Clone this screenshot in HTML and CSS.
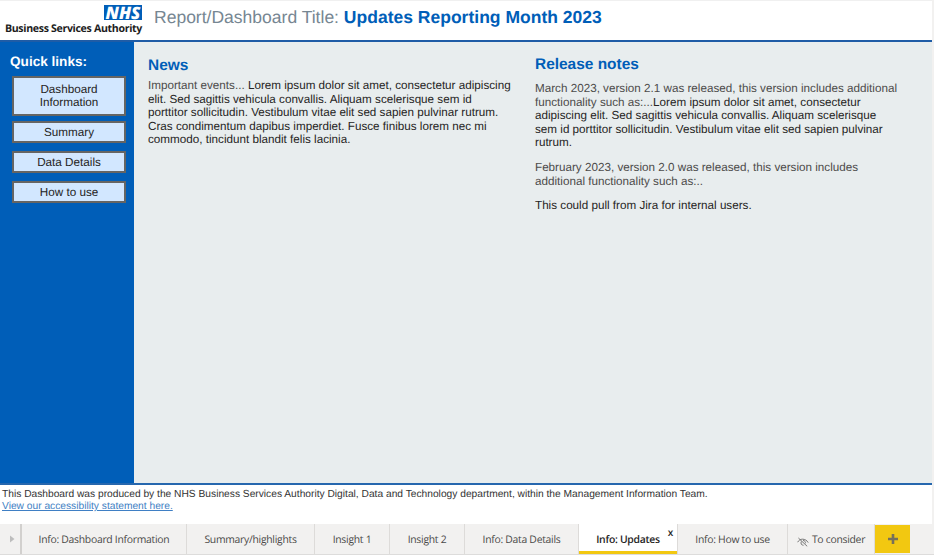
FILE: index.html
```html
<!DOCTYPE html>
<html lang="en">
<head>
<meta charset="utf-8">
<title>Updates Reporting Month 2023</title>
<link rel="stylesheet" href="styles.css">
</head>
<body>
<div class="report">
  <header class="header">
    <div class="brand">
      <div class="nhs"><span>NHS</span></div>
      <div class="org">Business Services Authority</div>
    </div>
    <h1 class="title"><span class="title-label">Report/Dashboard Title:</span> <b>Updates Reporting Month 2023</b></h1>
  </header>
  <main class="main">
    <nav class="sidebar">
      <h2 class="side-title">Quick links:</h2>
      <a class="link tall">Dashboard<br>Information</a>
      <a class="link">Summary</a>
      <a class="link">Data Details</a>
      <a class="link">How to use</a>
    </nav>
    <section class="news">
      <h2 class="heading heading-news">News</h2>
      <p><span class="soft">Important events...</span> Lorem ipsum dolor sit amet, consectetur adipiscing<br>elit. Sed sagittis vehicula convallis. Aliquam scelerisque sem id<br>porttitor sollicitudin. Vestibulum vitae elit sed sapien pulvinar rutrum.<br>Cras condimentum dapibus imperdiet. Fusce finibus lorem nec mi<br>commodo, tincidunt blandit felis lacinia.</p>
    </section>
    <section class="notes">
      <h2 class="heading">Release notes</h2>
      <p><span class="soft">March 2023, version 2.1 was released, this version includes additional<br>functionality such as:...</span>Lorem ipsum dolor sit amet, consectetur<br>adipiscing elit. Sed sagittis vehicula convallis. Aliquam scelerisque<br>sem id porttitor sollicitudin. Vestibulum vitae elit sed sapien pulvinar<br>rutrum.</p>
      <p><span class="soft">February 2023, version 2.0 was released, this version includes<br>additional functionality such as:..</span></p>
      <p>This could pull from Jira for internal users.</p>
    </section>
  </main>
  <footer class="footer">
    <div>This Dashboard was produced by the NHS Business Services Authority Digital, Data and Technology department, within the Management Information Team.</div>
    <a class="access">View our accessibility statement here.</a>
  </footer>
</div>
<nav class="tabs">
  <div class="scroll"><svg width="5" height="8" viewBox="0 0 5 8"><path d="M0 0.5L4.5 4L0 7.5Z" fill="#bdbdbd"/></svg></div>
  <div class="tab t1">Info: Dashboard Information</div>
  <div class="tab t2">Summary/highlights</div>
  <div class="tab t3">Insight 1</div>
  <div class="tab t4">Insight 2</div>
  <div class="tab t5">Info: Data Details</div>
  <div class="tab t6 active">Info: Updates<span class="close">x</span></div>
  <div class="tab t7">Info: How to use</div>
  <div class="tab t8"><svg class="eye" width="12" height="10" viewBox="0 0 12 10" fill="none" stroke="#777" stroke-width="1"><path d="M0.7 5.2C2.5 1.2 8.7 1 11.2 5.6M1.4 1L10.2 9.3M4.4 4.5C3.3 6.3 4.5 8.4 6.5 8.3M6 3.5C7.8 3.4 8.8 5 8.3 6.4"/></svg>To consider</div>
  <div class="add"><svg width="10" height="10" viewBox="0 0 10 10"><path d="M5 0V10M0 5H10" stroke="#77705a" stroke-width="2.6"/></svg></div>
</nav>
</body>
</html>
```
FILE: styles.css
```css
* { box-sizing: border-box; }
body {
  margin: 0;
  width: 934px;
  height: 555px;
  overflow: hidden;
  background: #f2f1f0;
  font-family: "Liberation Sans", Arial, sans-serif;
  color: #252423;
  text-rendering: geometricPrecision;
}
h1, h2, p { margin: 0; }
.report {
  width: 932px;
  height: 524px;
  background: #fff;
  border-top: 1px solid #f0f0f0;
  display: flex;
  flex-direction: column;
}
.header {
  height: 41px;
  border-bottom: 2px solid #1f5ca6;
  display: flex;
  flex: none;
}
.brand {
  width: 142px;
  padding-top: 4px;
  display: flex;
  flex-direction: column;
  align-items: flex-end;
  white-space: nowrap;
}
.nhs {
  width: 38px;
  height: 15px;
  background: #005eb8;
  color: #fff;
  font: italic 800 17px/15px "Open Sans", sans-serif;
  display: flex;
  justify-content: center;
}
.org {
  font: 700 10.6px/14px "Open Sans", sans-serif;
  letter-spacing: -0.33px;
  margin-top: 2px;
  color: #1d1d1d;
}
.title {
  margin-left: 12px;
  font-size: 17.52px;
  line-height: 20px;
  padding-top: 6px;
  font-weight: 400;
  color: #005eb8;
  white-space: nowrap;
}
.title-label { color: #768692; }
.main {
  height: 441px;
  flex: none;
  display: flex;
  background: #e8edee;
}
.sidebar {
  width: 134px;
  background: #005eb8;
  padding: 11px 8px 0 12px;
  display: flex;
  flex-direction: column;
}
.side-title {
  margin-left: -2px;
  color: #fff;
  font-size: 13.6px;
  line-height: 17px;
  margin-bottom: 6px;
}
.link {
  height: 22px;
  width: 114px;
  margin-bottom: 8px;
  border: 2px solid #666563;
  background: #d2e7ff;
  font-size: 11.7px;
  line-height: 19px;
  text-align: center;
}
.link.tall {
  height: 40px;
  margin-bottom: 5px;
  padding-top: 5px;
  line-height: 13px;
}
.news { width: 400px; padding: 15px 0 0 14px; }
.notes { padding: 14px 0 0 1px; }
.heading {
  font-size: 15.45px;
  line-height: 18px;
  color: #005eb8;
  margin-bottom: 8px;
}
.heading-news { margin-bottom: 4px; }
.main p {
  font-size: 11.68px;
  line-height: 13.6px;
  margin-bottom: 11px;
  white-space: nowrap;
}
.soft { color: #4c4b4a; }
.footer {
  flex: 1;
  border-top: 2px solid #2667ae;
  padding: 4px 2px 0;
  font-size: 10.22px;
  line-height: 12px;
  white-space: nowrap;
  color: #333;
}
.access { color: #3f7fc4; text-decoration: underline; }
.tabs {
  height: 31px;
  display: flex;
  border-bottom: 1px solid #dddcdb;
  font: 400 10.4px/30px "Open Sans", sans-serif;
  letter-spacing: -0.28px;
  color: #4a4948;
}
.scroll {
  width: 22px;
  border-right: 2px solid #d2d0ce;
  display: flex;
  align-items: center;
  padding-left: 10px;
}
.tab {
  border-right: 1px solid #dddbd9;
  padding-top: 2px;
  display: flex;
  align-items: center;
  justify-content: center;
  white-space: nowrap;
  position: relative;
}
.t1 { width: 165px; }
.t2 { width: 128px; }
.t3 { width: 75px; }
.t4 { width: 75px; }
.t5 { width: 114px; }
.t6 { width: 99px; }
.t7 { width: 110px; }
.t8 { width: 87px; }
.active {
  background: #fff;
  color: #252423;
  font-weight: 600;
  box-shadow: inset 0 -3px #f2c811;
}
.close {
  position: absolute;
  right: 4px;
  top: 2px;
  line-height: 12px;
  font-size: 10px;
}
.eye { margin-right: 3px; margin-top: 3px; }
.add {
  width: 35px;
  height: 28px;
  margin-top: 1px;
  background: #f2c811;
  display: flex;
  align-items: center;
  justify-content: center;
}
```
